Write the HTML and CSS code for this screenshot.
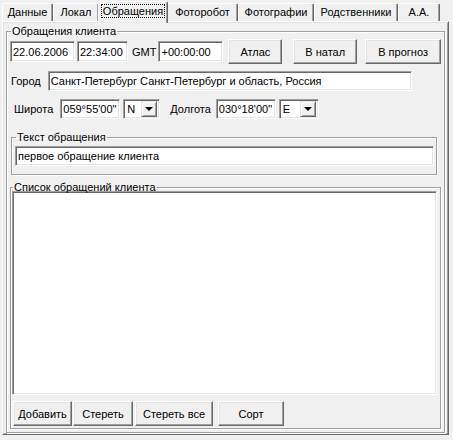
FILE: index.html
```html
<!DOCTYPE html>
<html lang="ru">
<head>
  <meta charset="UTF-8" />
  <title>Обращения</title>
  <link rel="stylesheet" href="styles.css">
</head>
<body>
  <!-- Tab strip -->
  <div class="tabs">
    <div class="tab t-data">Данные</div>
    <div class="tab t-local">Локал</div>
    <div class="tab t-calls active"><span class="focus">Обращения</span></div>
    <div class="tab t-photofit">Фоторобот</div>
    <div class="tab t-photos">Фотографии</div>
    <div class="tab t-family">Родственники</div>
    <div class="tab t-aa">А.А.</div>
  </div>

  <!-- Tab page -->
  <div class="panel">
    <fieldset class="group main-group">
      <legend>Обращения клиента</legend>

      <div class="row row-time">
        <input class="field w-date" value="22.06.2006">
        <input class="field w-time" value="22:34:00">
        <span class="lbl gmt">GMT</span>
        <input class="field w-tz" value="+00:00:00">
        <button class="btn b-atlas">Атлас</button>
        <button class="btn b-natal">В натал</button>
        <button class="btn b-prog">В прогноз</button>
      </div>

      <div class="row row-city">
        <span class="lbl">Город</span>
        <input class="field w-city" value="Санкт-Петербург Санкт-Петербург и область, Россия">
      </div>

      <div class="row row-coords">
        <span class="lbl">Широта</span>
        <input class="field w-coord lat" value="059°55'00&quot;">
        <div class="combo w-ns">
          <span class="combo-val">N</span>
          <span class="combo-btn"><span class="arrow"></span></span>
        </div>
        <span class="lbl lon">Долгота</span>
        <input class="field w-coord" value="030°18'00&quot;">
        <div class="combo w-ew">
          <span class="combo-val">E</span>
          <span class="combo-btn"><span class="arrow"></span></span>
        </div>
      </div>

      <fieldset class="group text-group">
        <legend>Текст обращения</legend>
        <input class="field w-text" value="первое обращение клиента">
      </fieldset>

      <fieldset class="group list-group">
        <legend>Список обращений клиента</legend>
        <div class="listbox"></div>
        <div class="row row-buttons">
          <button class="btn b-add">Добавить</button>
          <button class="btn b-del">Стереть</button>
          <button class="btn b-delall">Стереть все</button>
          <button class="btn b-sort">Сорт</button>
        </div>
      </fieldset>
    </fieldset>
  </div>
</body>
</html>
```

FILE: styles.css
```css
* {
  box-sizing: border-box;
}
body {
  margin: 0;
  background: #f0f0f0;
  font-family: "Liberation Sans", Arial, sans-serif;
  font-size: 11px;
  color: #000;
  width: 453px;
  height: 440px;
  overflow: hidden;
}

/* tabs */
.tabs {
  display: flex;
  align-items: flex-end;
  height: 21px;
  padding-left: 2px;
}
.tab {
  height: 18px;
  line-height: 16px;
  text-align: center;
  border-top: 1px solid #fff;
  border-left: 1px solid #fff;
  border-right: 1px solid #696969;
  box-shadow: inset -1px 0 #a0a0a0;
  border-radius: 2px 2px 0 0;
  white-space: nowrap;
}
.t-data { width: 51px; }
.t-local { width: 46px; }
.t-calls { width: 70px; }
.t-photofit { width: 71px; }
.t-photos { width: 76px; }
.t-family { width: 84px; }
.t-aa { width: 42px; }
.tab.active {
  height: 22px;
  margin: 0 -1px -2px -1px;
  line-height: 18px;
  position: relative;
  z-index: 1;
  background: #f0f0f0;
}
.focus {
  outline: 1px dotted #000;
  padding: 0 1px;
}

/* page */
.panel {
  margin-left: 2px;
  width: 447px;
  height: 414px;
  padding: 3px 3px 0 3px;
  border: 1px solid;
  border-color: #fff #696969 #696969 #fff;
  box-shadow: inset 1px 1px #e3e3e3, inset -1px -1px #a0a0a0;
}

.group {
  margin: 0;
  min-width: 0;
  border: 1px solid #a0a0a0;
  box-shadow: 1px 1px #fff, inset 1px 1px #fff;
}
.group legend {
  padding: 0 1px;
  margin-left: 1px;
  line-height: 13px;
}
.main-group {
  padding: 0 3px 3px 3px;
}

.row {
  display: flex;
  align-items: center;
}
.lbl {
  white-space: nowrap;
}

/* sunken edit box */
.field {
  font-family: inherit;
  font-size: 11px;
  color: #000;
  background: #fff;
  height: 21px;
  padding: 0 2px;
  margin: 0;
  border: 1px solid;
  border-color: #a0a0a0 #fff #fff #a0a0a0;
  box-shadow: inset 1px 1px #696969, inset -1px -1px #e3e3e3;
  outline: none;
}

/* raised push button */
.btn {
  font-family: inherit;
  font-size: 11px;
  color: #000;
  background: #f0f0f0;
  height: 25px;
  margin: 0;
  padding: 0;
  border: 1px solid;
  border-color: #fff #696969 #696969 #fff;
  box-shadow: inset -1px -1px #a0a0a0, inset 1px 1px #e3e3e3;
}

.row-time {
  margin-top: 1px;
  height: 25px;
}
.w-date { width: 65px; }
.w-time { width: 51px; margin-left: 2px; }
.gmt { margin-left: 4px; }
.w-tz { width: 65px; margin-left: 2px; }
.b-atlas { width: 54px; margin-left: 5px; }
.b-natal { width: 64px; margin-left: 11px; }
.b-prog { width: 76px; margin-left: 8px; }

.row-city {
  margin-top: 7px;
  padding-left: 1px;
}
.w-city {
  width: 364px;
  height: 20px;
  margin-left: 7px;
}

.row-coords {
  margin-top: 8px;
  padding-left: 4px;
}
.w-coord {
  width: 60px;
  height: 20px;
  margin-left: 5px;
}
.lat { margin-left: 7px; }
.lon { margin-left: 10px; }

/* combo box */
.combo {
  display: flex;
  align-items: center;
  height: 20px;
  margin-left: 3px;
  padding: 2px;
  background: #fff;
  border: 1px solid;
  border-color: #a0a0a0 #fff #fff #a0a0a0;
  box-shadow: inset 1px 1px #696969, inset -1px -1px #e3e3e3;
}
.w-ns { width: 37px; }
.w-ew { width: 40px; }
.combo-val {
  flex: 1;
  padding-left: 1px;
}
.combo-btn {
  width: 16px;
  height: 16px;
  display: flex;
  align-items: center;
  justify-content: center;
  background: #f0f0f0;
  border: 1px solid;
  border-color: #e3e3e3 #696969 #696969 #e3e3e3;
  box-shadow: inset 1px 1px #fff, inset -1px -1px #a0a0a0;
}
.arrow {
  width: 0;
  height: 0;
  border-left: 4px solid transparent;
  border-right: 4px solid transparent;
  border-top: 4px solid #000;
}

.text-group {
  margin: 12px 4px 0 1px;
  padding: 2px 2px 8px 3px;
}
.w-text {
  width: 100%;
  height: 20px;
}

.list-group {
  margin: 6px 0 0 0;
  padding: 0 3px 2px 1px;
}
.listbox {
  margin-top: -3px;
  height: 204px;
  background: #fff;
  border: 1px solid;
  border-color: #a0a0a0 #fff #fff #a0a0a0;
  box-shadow: inset 1px 1px #696969, inset -1px -1px #e3e3e3;
}
.row-buttons {
  margin-top: 6px;
  padding-left: 1px;
}
.b-add { width: 59px; }
.b-del { width: 60px; margin-left: 1px; }
.b-delall { width: 78px; margin-left: 2px; }
.b-sort { width: 66px; margin-left: 5px; }
```
